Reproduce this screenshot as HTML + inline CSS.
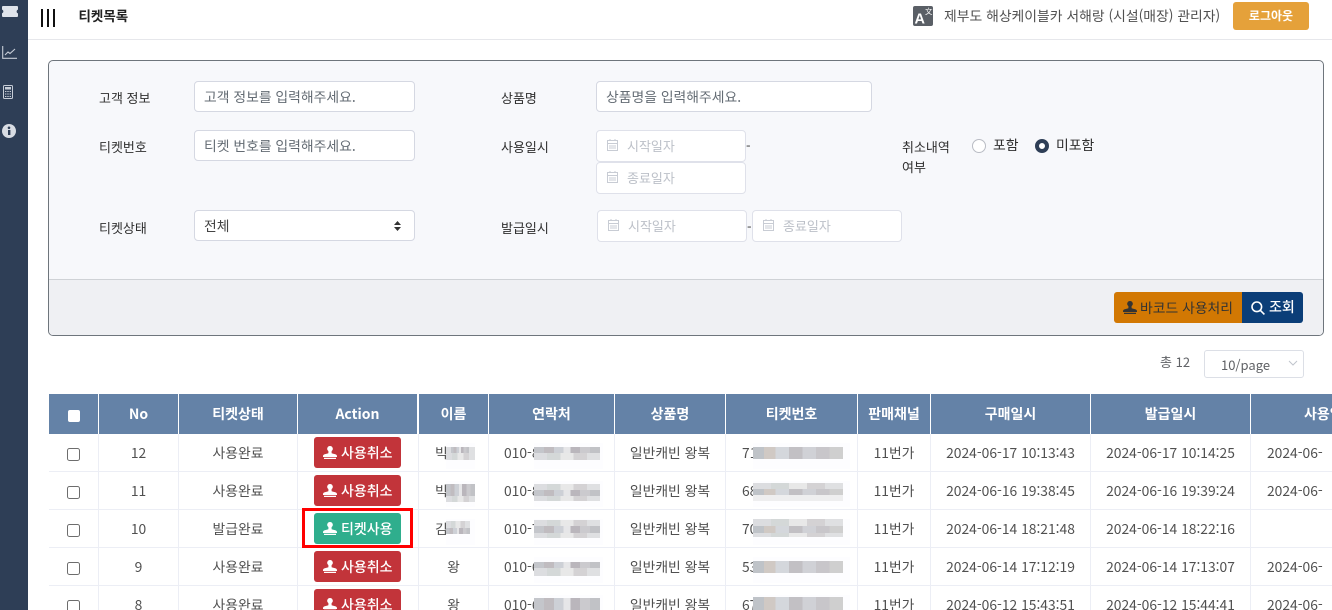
<!DOCTYPE html>
<html lang="ko"><head><meta charset="utf-8"><title>티켓목록</title>
<style>
*{box-sizing:border-box}
html,body{margin:0;padding:0;width:1332px;height:610px;overflow:hidden;background:#fff}
body{font-family:"Noto Sans CJK KR","Liberation Sans",sans-serif;font-size:13px;color:#555;position:relative}
.a{position:absolute;white-space:nowrap}
.side{position:absolute;left:0;top:0;width:28px;height:610px;background:#2e3e56}
.lbl{position:absolute;white-space:nowrap;color:#2f2f2f;font-size:13px;line-height:18px}
.chk{font-size:13.9px}
.inp{position:absolute;background:#fff;border:1px solid #d5d8e2;border-radius:4px;height:31px;line-height:29px;padding-left:9px;font-size:13.85px;color:#646c74;white-space:nowrap}
.date{position:absolute;background:#fff;border:1px solid #dfe1ea;border-radius:4px;height:32px;line-height:30px;font-size:13px;color:#bcc0c8;padding-left:30px;white-space:nowrap}
.date svg{position:absolute;left:10px;top:8px}
.th{position:absolute;top:394px;height:40px;background:#6482a7;color:#fff;font-weight:700;font-size:14px;line-height:41px;text-align:center;white-space:nowrap;overflow:hidden}
.c{position:absolute;height:38px;line-height:38px;margin-top:-1px;text-align:center;font-size:13.85px;color:#505050;white-space:nowrap;overflow:hidden}
.hl{position:absolute;left:49px;width:1283px;height:1px;background:#eceef5}
.vl{position:absolute;top:434px;height:176px;width:1px;background:#eceef5}
.cb{position:absolute;left:67px;width:13px;height:13px;border:1px solid #6d6d6d;border-radius:2.5px;background:#fff}
.btn{position:absolute;left:314px;width:87px;height:31px;border-radius:3px;color:#fff;font-size:14px;font-weight:500;line-height:32px;padding-left:27px;white-space:nowrap;background:#c2343a}
.btn.g{background:#2fae8d}
.btn svg{position:absolute;left:9px;top:9px}
</style></head><body>

<div class="side">
<svg class="a" style="left:2px;top:6px" width="16" height="11" viewBox="0 0 16 11"><path d="M0 1a1 1 0 0 1 1-1h14a1 1 0 0 1 1 1v2.6a2 2 0 0 0 0 3.8V10a1 1 0 0 1-1 1H1a1 1 0 0 1-1-1V7.4a2 2 0 0 0 0-3.8z" fill="#dfe3ea"/></svg>
<svg class="a" style="left:2px;top:46px" width="15" height="13" viewBox="0 0 15 13" fill="none" stroke="#c6ccd6" stroke-width="1.1"><path d="M.7 0v12.3H15"/><path d="M3 9l3-3 2 1.5L13 3"/></svg>
<svg class="a" style="left:3px;top:85px" width="10" height="14" viewBox="0 0 10 14"><rect x=".5" y=".5" width="9" height="13" rx="1" fill="none" stroke="#c6ccd6"/><rect x="2" y="2" width="6" height="2.5" fill="#c6ccd6"/><path d="M2 6.5h6M2 9h6M2 11.5h6" stroke="#c6ccd6" stroke-dasharray="1.4 .9"/></svg>
<svg class="a" style="left:2px;top:124px" width="14" height="14" viewBox="0 0 14 14"><circle cx="7" cy="7" r="7" fill="#d8dce3"/><rect x="6" y="6" width="2.4" height="5" fill="#2e3e56"/><circle cx="7" cy="3.8" r="1.3" fill="#2e3e56"/></svg>
</div>

<div class="a" style="left:28px;top:39px;width:1304px;height:1px;background:#e6e7eb"></div>
<div class="a" style="left:41px;top:9px;width:2px;height:18px;background:#111"></div>
<div class="a" style="left:47px;top:9px;width:2px;height:18px;background:#111"></div>
<div class="a" style="left:53px;top:9px;width:2px;height:18px;background:#111"></div>
<div class="a" style="left:78.5px;top:5px;font-size:13.5px;font-weight:700;color:#222;line-height:20px">티켓목록</div>

<svg class="a" style="left:913px;top:6px" width="20" height="20" viewBox="0 0 20 20"><rect width="20" height="20" rx="2" fill="#5a5f66"/><text x="1.5" y="17.5" font-size="14.5" font-weight="700" fill="#fff" font-family="Liberation Sans">A</text><text x="12" y="8" font-size="7.5" fill="#fff" font-family="Noto Sans CJK SC">文</text></svg>
<div class="a" style="left:944px;top:5px;font-size:13.85px;line-height:21px;color:#505050">제부도 해상케이블카 서해랑 (시설(매장) 관리자)</div>
<div class="a" style="left:1233px;top:2px;width:76px;height:28px;background:#e5a13a;border-radius:3px;color:#fff;font-size:12px;font-weight:700;line-height:28px;text-align:center">로그아웃</div>

<div class="a" style="left:48px;top:60px;width:1276px;height:276px;background:#f7f8fb;border:1px solid #6e757c;border-radius:5px;overflow:hidden">
 <div class="a" style="left:0;top:218px;width:1276px;height:57px;background:#eff0f3;border-top:1px solid #cfd2d6"></div>
</div>

<div class="lbl" style="left:99px;top:89px">고객 정보</div>
<div class="inp" style="left:194px;top:81px;width:221px">고객 정보를 입력해주세요.</div>
<div class="lbl" style="left:99px;top:138px">티켓번호</div>
<div class="inp" style="left:194px;top:130px;width:221px">티켓 번호를 입력해주세요.</div>
<div class="lbl" style="left:99px;top:219px">티켓상태</div>
<div class="inp" style="left:194px;top:210px;width:221px;color:#444;line-height:28px">전체</div>
<svg class="a" style="left:393px;top:221px" width="9" height="10" viewBox="0 0 9 10"><path d="M4.5 0L8 4H1zM4.5 10L1 6h7z" fill="#333"/></svg>

<div class="lbl" style="left:501px;top:89px">상품명</div>
<div class="inp" style="left:596px;top:81px;width:276px">상품명을 입력해주세요.</div>
<div class="lbl" style="left:501px;top:138px">사용일시</div>
<div class="date" style="left:596px;top:130px;width:150px">시작일자<svg width="11" height="12" viewBox="0 0 11 12" fill="none" stroke="#c8ccd4"><rect x=".5" y="1.5" width="10" height="10"/><path d="M.5 4.5h10M2 7h7M2 9h7M3 0v2M8 0v2"/></svg></div>
<div class="a" style="left:746px;top:137px;font-size:13px;line-height:18px;color:#333">-</div>
<div class="date" style="left:596px;top:162px;width:150px">종료일자<svg width="11" height="12" viewBox="0 0 11 12" fill="none" stroke="#c8ccd4"><rect x=".5" y="1.5" width="10" height="10"/><path d="M.5 4.5h10M2 7h7M2 9h7M3 0v2M8 0v2"/></svg></div>
<div class="lbl" style="left:501px;top:219px">발급일시</div>
<div class="date" style="left:597px;top:210px;width:150px">시작일자<svg width="11" height="12" viewBox="0 0 11 12" fill="none" stroke="#c8ccd4"><rect x=".5" y="1.5" width="10" height="10"/><path d="M.5 4.5h10M2 7h7M2 9h7M3 0v2M8 0v2"/></svg></div>
<div class="a" style="left:747px;top:218px;font-size:13px;line-height:18px;color:#333">-</div>
<div class="date" style="left:752px;top:210px;width:150px">종료일자<svg width="11" height="12" viewBox="0 0 11 12" fill="none" stroke="#c8ccd4"><rect x=".5" y="1.5" width="10" height="10"/><path d="M.5 4.5h10M2 7h7M2 9h7M3 0v2M8 0v2"/></svg></div>

<div class="lbl" style="left:902px;top:137px;line-height:19.5px">취소내역<br>여부</div>
<div class="a" style="left:972px;top:139px;width:14px;height:14px;border:1px solid #b9bcc4;border-radius:50%;background:#fff"></div>
<div class="lbl chk" style="left:993px;top:136px">포함</div>
<div class="a" style="left:1035px;top:139px;width:14px;height:14px;border:4px solid #2e3e56;border-radius:50%;background:#fff"></div>
<div class="lbl chk" style="left:1056px;top:136px">미포함</div>

<div class="a" style="left:1114px;top:292px;width:128px;height:31px;background:#d27803;border-radius:3px 0 0 3px;color:#333;font-size:13.85px;line-height:31px;padding-left:26px">바코드 사용처리</div>
<svg class="a" style="left:1123px;top:301px" width="14" height="13" viewBox="0 0 14 13"><path d="M7 0a2.8 2.8 0 0 1 1.6 5.1V7c0 1 5.4.6 5.4 3v1H0v-1c0-2.4 5.4-2 5.4-3V5.1A2.8 2.8 0 0 1 7 0zM1 11.8h12V13H1z" fill="#333"/></svg>
<div class="a" style="left:1242px;top:292px;width:61px;height:31px;background:#0b3e78;border-radius:0 3px 3px 0;color:#fff;font-size:14px;font-weight:500;line-height:31px;padding-left:27px">조회</div>
<svg class="a" style="left:1251px;top:301px" width="14" height="14" viewBox="0 0 14 14" fill="none" stroke="#fff" stroke-width="1.6"><circle cx="5.8" cy="5.8" r="4.8"/><path d="M9.3 9.3L13.4 13.4"/></svg>

<div class="a" style="left:1160px;top:353px;font-size:13px;line-height:18px;color:#606266">총 12</div>
<div class="a" style="left:1204px;top:350px;width:100px;height:28px;border:1px solid #dcdfe6;border-radius:3px;background:#fff;font-size:13px;line-height:27px;padding-left:16px;color:#606266">10/page</div>
<svg class="a" style="left:1288px;top:360px" width="10" height="7" viewBox="0 0 10 7" fill="none" stroke="#c0c4cc"><path d="M1 1l4 4 4-4"/></svg>

<!-- header -->
<div class="th" style="left:49px;width:49px"></div>
<div class="a" style="left:68px;top:410px;width:12px;height:12px;background:#fff;border-radius:2px"></div>
<div class="th" style="left:99px;width:79px">No</div>
<div class="th" style="left:179px;width:118px">티켓상태</div>
<div class="th" style="left:298px;width:119px">Action</div>
<div class="th" style="left:419px;width:69px">이름</div>
<div class="th" style="left:489px;width:125px">연락처</div>
<div class="th" style="left:615px;width:110px">상품명</div>
<div class="th" style="left:726px;width:131px">티켓번호</div>
<div class="th" style="left:858px;width:72px">판매채널</div>
<div class="th" style="left:931px;width:159px">구매일시</div>
<div class="th" style="left:1091px;width:159px">발급일시</div>
<div class="th" style="left:1251px;width:81px;text-align:left;padding-left:53px">사용일시</div>

<!-- grid -->
<div class="hl" style="top:471px"></div><div class="hl" style="top:509px"></div><div class="hl" style="top:547px"></div><div class="hl" style="top:585px"></div>
<div class="vl" style="left:98px"></div><div class="vl" style="left:178px"></div><div class="vl" style="left:297px"></div><div class="vl" style="left:418px"></div><div class="vl" style="left:488px"></div><div class="vl" style="left:614px"></div><div class="vl" style="left:725px"></div><div class="vl" style="left:857px"></div><div class="vl" style="left:930px"></div><div class="vl" style="left:1090px"></div><div class="vl" style="left:1250px"></div>

<!-- row 12 -->
<div class="cb" style="top:448px"></div>
<div class="c" style="left:99px;width:79px;top:434px">12</div><div class="c" style="left:179px;width:118px;top:434px">사용완료</div>
<div class="btn" style="top:437px"><svg width="14" height="13" viewBox="0 0 14 13"><path d="M7 0a2.8 2.8 0 0 1 1.6 5.1V7c0 1 5.4.6 5.4 3v1H0v-1c0-2.4 5.4-2 5.4-3V5.1A2.8 2.8 0 0 1 7 0zM1 11.8h12V13H1z" fill="#fff"/></svg>사용취소</div>
<div class="c" style="left:435px;top:434px">빅</div>
<div class="c" style="left:504px;top:434px">010-8</div>
<div class="c" style="left:615px;width:110px;top:434px">일반캐빈 왕복</div>
<div class="c" style="left:742px;top:434px">71</div>
<div class="c" style="left:858px;width:72px;top:434px">11번가</div>
<div class="c" style="left:931px;width:159px;top:434px">2024-06-17 10:13:43</div>
<div class="c" style="left:1091px;width:159px;top:434px">2024-06-17 10:14:25</div>
<div class="c" style="left:1267px;top:434px">2024-06-</div>

<!-- row 11 -->
<div class="cb" style="top:486px"></div>
<div class="c" style="left:99px;width:79px;top:472px">11</div><div class="c" style="left:179px;width:118px;top:472px">사용완료</div>
<div class="btn" style="top:475px"><svg width="14" height="13" viewBox="0 0 14 13"><path d="M7 0a2.8 2.8 0 0 1 1.6 5.1V7c0 1 5.4.6 5.4 3v1H0v-1c0-2.4 5.4-2 5.4-3V5.1A2.8 2.8 0 0 1 7 0zM1 11.8h12V13H1z" fill="#fff"/></svg>사용취소</div>
<div class="c" style="left:435px;top:472px">빅</div>
<div class="c" style="left:504px;top:472px">010-8</div>
<div class="c" style="left:615px;width:110px;top:472px">일반캐빈 왕복</div>
<div class="c" style="left:742px;top:472px">68</div>
<div class="c" style="left:858px;width:72px;top:472px">11번가</div>
<div class="c" style="left:931px;width:159px;top:472px">2024-06-16 19:38:45</div>
<div class="c" style="left:1091px;width:159px;top:472px">2024-06-16 19:39:24</div>
<div class="c" style="left:1267px;top:472px">2024-06-</div>

<!-- row 10 -->
<div class="cb" style="top:524px"></div>
<div class="c" style="left:99px;width:79px;top:510px">10</div><div class="c" style="left:179px;width:118px;top:510px">발급완료</div>
<div class="btn g" style="top:513px"><svg width="14" height="13" viewBox="0 0 14 13"><path d="M7 0a2.8 2.8 0 0 1 1.6 5.1V7c0 1 5.4.6 5.4 3v1H0v-1c0-2.4 5.4-2 5.4-3V5.1A2.8 2.8 0 0 1 7 0zM1 11.8h12V13H1z" fill="#fff"/></svg>티켓사용</div>
<div class="a" style="left:302px;top:508px;width:111px;height:40px;border:3px solid #f00"></div>
<div class="c" style="left:435px;top:510px">김</div>
<div class="c" style="left:504px;top:510px">010-7</div>
<div class="c" style="left:615px;width:110px;top:510px">일반캐빈 왕복</div>
<div class="c" style="left:742px;top:510px">70</div>
<div class="c" style="left:858px;width:72px;top:510px">11번가</div>
<div class="c" style="left:931px;width:159px;top:510px">2024-06-14 18:21:48</div>
<div class="c" style="left:1091px;width:159px;top:510px">2024-06-14 18:22:16</div>

<!-- row 9 -->
<div class="cb" style="top:562px"></div>
<div class="c" style="left:99px;width:79px;top:548px">9</div><div class="c" style="left:179px;width:118px;top:548px">사용완료</div>
<div class="btn" style="top:551px"><svg width="14" height="13" viewBox="0 0 14 13"><path d="M7 0a2.8 2.8 0 0 1 1.6 5.1V7c0 1 5.4.6 5.4 3v1H0v-1c0-2.4 5.4-2 5.4-3V5.1A2.8 2.8 0 0 1 7 0zM1 11.8h12V13H1z" fill="#fff"/></svg>사용취소</div>
<div class="c" style="left:419px;width:69px;top:548px">왕</div>
<div class="c" style="left:504px;top:548px">010-6</div>
<div class="c" style="left:615px;width:110px;top:548px">일반캐빈 왕복</div>
<div class="c" style="left:742px;top:548px">53</div>
<div class="c" style="left:858px;width:72px;top:548px">11번가</div>
<div class="c" style="left:931px;width:159px;top:548px">2024-06-14 17:12:19</div>
<div class="c" style="left:1091px;width:159px;top:548px">2024-06-14 17:13:07</div>
<div class="c" style="left:1267px;top:548px">2024-06-</div>

<!-- row 8 -->
<div class="cb" style="top:600px"></div>
<div class="c" style="left:99px;width:79px;top:586px">8</div><div class="c" style="left:179px;width:118px;top:586px">사용완료</div>
<div class="btn" style="top:589px"><svg width="14" height="13" viewBox="0 0 14 13"><path d="M7 0a2.8 2.8 0 0 1 1.6 5.1V7c0 1 5.4.6 5.4 3v1H0v-1c0-2.4 5.4-2 5.4-3V5.1A2.8 2.8 0 0 1 7 0zM1 11.8h12V13H1z" fill="#fff"/></svg>사용취소</div>
<div class="c" style="left:419px;width:69px;top:586px">왕</div>
<div class="c" style="left:504px;top:586px">010-6</div>
<div class="c" style="left:615px;width:110px;top:586px">일반캐빈 왕복</div>
<div class="c" style="left:742px;top:586px">67</div>
<div class="c" style="left:858px;width:72px;top:586px">11번가</div>
<div class="c" style="left:931px;width:159px;top:586px">2024-06-12 15:43:51</div>
<div class="c" style="left:1091px;width:159px;top:586px">2024-06-12 15:44:41</div>
<div class="c" style="left:1267px;top:586px">2024-06-</div>

<!-- mosaics -->
<svg class="a" style="left:0;top:0" width="1332" height="610" shape-rendering="crispEdges">
<defs>
<linearGradient id="n1" x1="0" x2="1"><stop offset="0" stop-color="#c4c6cb"/><stop offset=".15" stop-color="#c4c6cb"/><stop offset=".15" stop-color="#c0bcc0"/><stop offset=".3" stop-color="#c0bcc0"/><stop offset=".3" stop-color="#cdd0d6"/><stop offset=".45" stop-color="#cdd0d6"/><stop offset=".45" stop-color="#e6e6e8"/><stop offset=".55" stop-color="#e6e6e8"/><stop offset=".55" stop-color="#bab6bc"/><stop offset=".7" stop-color="#bab6bc"/><stop offset=".7" stop-color="#cbcace"/><stop offset=".85" stop-color="#cbcace"/><stop offset=".85" stop-color="#c1c2c6"/><stop offset="1" stop-color="#c1c2c6"/></linearGradient>
<linearGradient id="n2" x1="0" x2="1"><stop offset="0" stop-color="#dcdde0"/><stop offset=".2" stop-color="#dcdde0"/><stop offset=".2" stop-color="#d4d8d8"/><stop offset=".4" stop-color="#d4d8d8"/><stop offset=".4" stop-color="#e8e8e8"/><stop offset=".6" stop-color="#e8e8e8"/><stop offset=".6" stop-color="#d4d2d4"/><stop offset=".8" stop-color="#d4d2d4"/><stop offset=".8" stop-color="#dfe0e2"/><stop offset="1" stop-color="#dfe0e2"/></linearGradient>
<linearGradient id="n3" x1="0" x2="1"><stop offset="0" stop-color="#bfc3c8"/><stop offset=".12" stop-color="#bfc3c8"/><stop offset=".12" stop-color="#d0c9c4"/><stop offset=".25" stop-color="#d0c9c4"/><stop offset=".25" stop-color="#d4d7dc"/><stop offset=".4" stop-color="#d4d7dc"/><stop offset=".4" stop-color="#c2c0c4"/><stop offset=".55" stop-color="#c2c0c4"/><stop offset=".55" stop-color="#d0d1d6"/><stop offset=".7" stop-color="#d0d1d6"/><stop offset=".7" stop-color="#c8c6ca"/><stop offset=".85" stop-color="#c8c6ca"/><stop offset=".85" stop-color="#cfcfcf"/><stop offset="1" stop-color="#cfcfcf"/></linearGradient>
</defs>
<g>
<rect x="534" y="443" width="69" height="26" fill="#fdfdff"/><rect x="534" y="447" width="66" height="6" fill="url(#n1)"/><rect x="534" y="453" width="66" height="7" fill="url(#n2)"/>
<rect x="534" y="481" width="69" height="26" fill="#fdfdff"/><rect x="534" y="484" width="66" height="6" fill="url(#n2)"/><rect x="534" y="490" width="66" height="6" fill="url(#n1)"/><rect x="534" y="496" width="66" height="5" fill="url(#n2)"/>
<rect x="534" y="519" width="69" height="26" fill="#fdfdff"/><rect x="534" y="520" width="66" height="6" fill="url(#n2)"/><rect x="534" y="526" width="66" height="7" fill="url(#n1)"/><rect x="534" y="533" width="66" height="5" fill="url(#n2)"/>
<rect x="534" y="557" width="69" height="26" fill="#fdfdff"/><rect x="534" y="562" width="66" height="6" fill="url(#n1)"/><rect x="534" y="568" width="66" height="8" fill="url(#n2)"/>
<rect x="534" y="595" width="69" height="15" fill="#fdfdff"/><rect x="534" y="598" width="66" height="12" fill="url(#n1)"/>

<rect x="753" y="443" width="97" height="26" fill="#fdfdff"/><rect x="753" y="447" width="90" height="12" fill="url(#n3)"/>
<rect x="753" y="481" width="97" height="26" fill="#fdfdff"/><rect x="753" y="483" width="90" height="6" fill="url(#n2)"/><rect x="753" y="489" width="90" height="6" fill="url(#n3)"/><rect x="753" y="495" width="90" height="6" fill="#eeeeef"/>
<rect x="753" y="519" width="97" height="26" fill="#fdfdff"/><rect x="753" y="519" width="90" height="7" fill="url(#n2)"/><rect x="753" y="526" width="90" height="7" fill="url(#n3)"/><rect x="753" y="533" width="90" height="4" fill="url(#n2)"/>
<rect x="753" y="557" width="97" height="26" fill="#fdfdff"/><rect x="753" y="561" width="90" height="12" fill="url(#n3)"/>
<rect x="753" y="595" width="97" height="15" fill="#fdfdff"/><rect x="753" y="597" width="90" height="13" fill="url(#n3)"/>

<rect x="446" y="443" width="29" height="26" fill="#fdfdff"/><rect x="446" y="447" width="29" height="13" fill="url(#n2)"/><rect x="451" y="447" width="18" height="6" fill="url(#n1)"/>
<rect x="446" y="481" width="29" height="26" fill="#fdfdff"/><rect x="446" y="484" width="29" height="12" fill="url(#n1)"/><rect x="446" y="496" width="29" height="6" fill="url(#n2)"/>
<rect x="446" y="519" width="29" height="26" fill="#fdfdff"/><rect x="446" y="521" width="24" height="7" fill="url(#n2)"/><rect x="446" y="528" width="24" height="6" fill="url(#n1)"/>
</g>
</svg>
</body></html>
